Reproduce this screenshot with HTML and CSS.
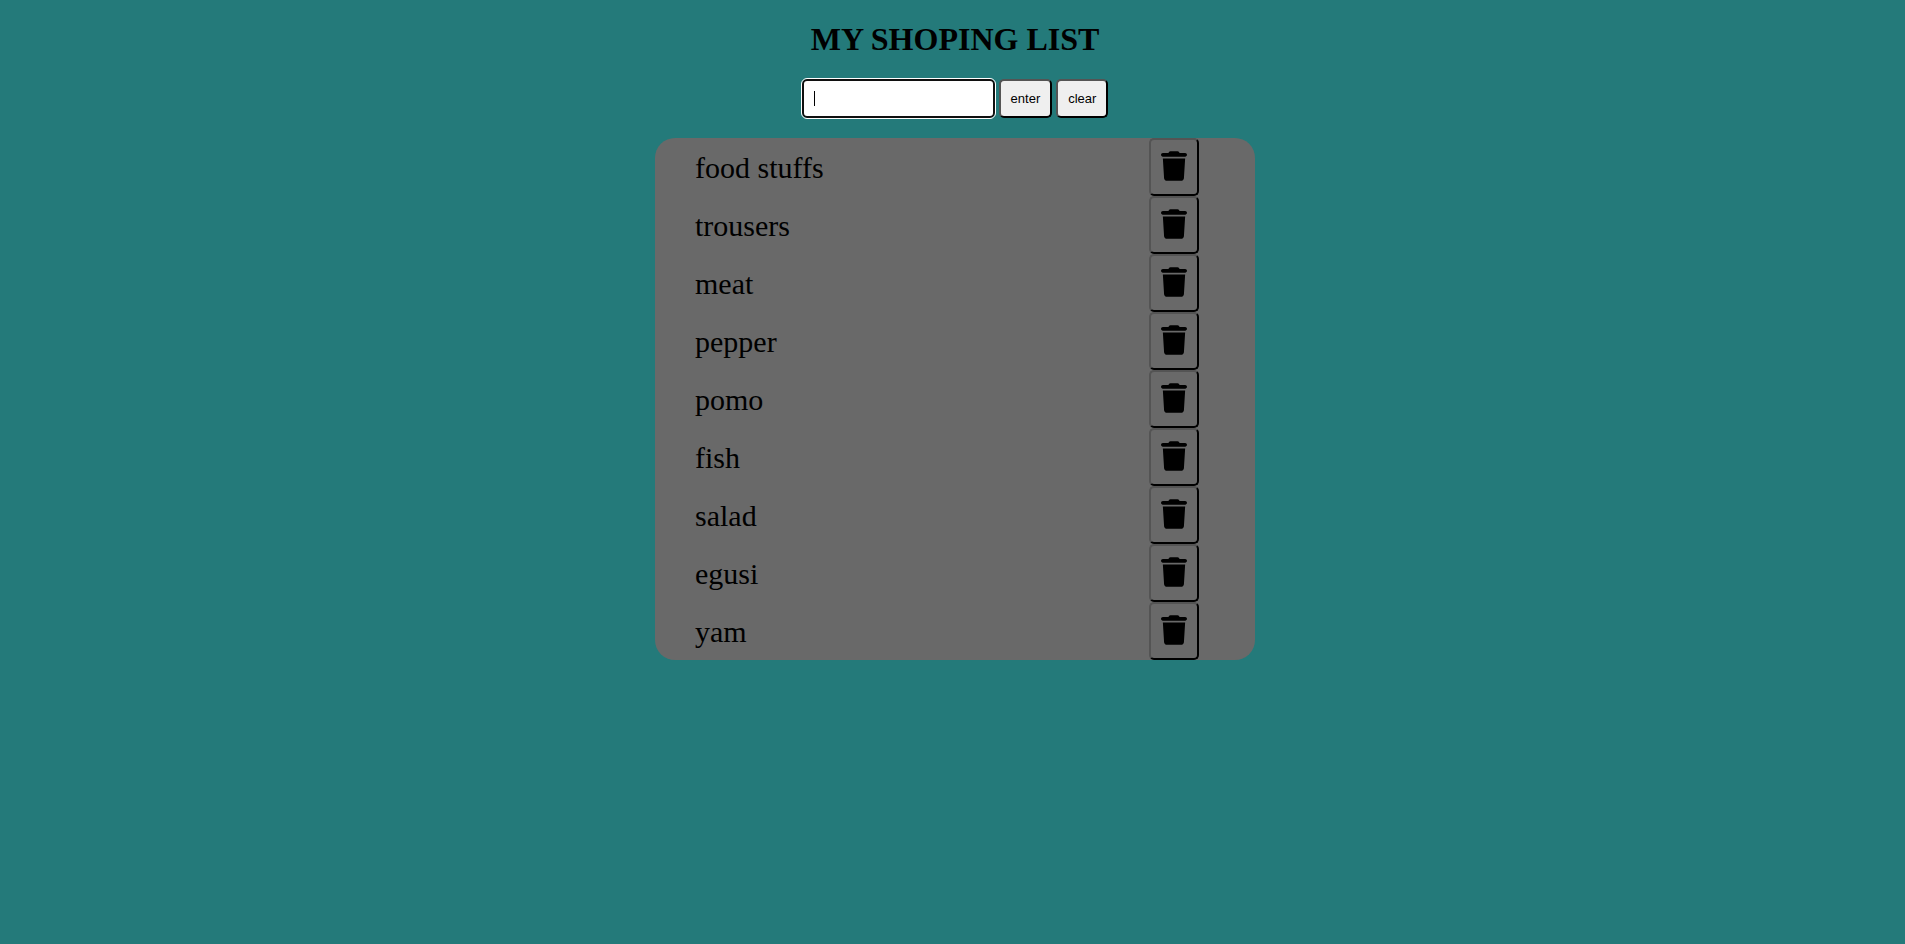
FILE: index.html
```html
<!DOCTYPE html>
<html lang="en">
<head>
<meta charset="utf-8">
<title>My Shoping List</title>
<link rel="stylesheet" href="styles.css">
</head>
<body>
<svg class="sprite" aria-hidden="true">
  <symbol id="trash" viewBox="0 0 448 512">
    <path d="M135.200 17.700L128 32H32C14.300 32 0 46.300 0 64S14.300 96 32 96H416c17.700 0 32-14.300 32-32s-14.300-32-32-32H320l-7.200-14.300C307.400 6.800 296.300 0 284.200 0H163.800c-12.100 0-23.200 6.800-28.600 17.700zM416 128H32L53.200 467c1.600 25.300 22.600 45 47.900 45H346.900c25.300 0 46.300-19.700 47.900-45L416 128z"/>
  </symbol>
</svg>
<main class="page">
  <h1 class="title">MY SHOPING LIST</h1>
  <form class="entry">
    <input class="entry-input" type="text" aria-label="New item">
    <button class="button" type="button">enter</button>
    <button class="button" type="button">clear</button>
  </form>
  <ul class="list">
    <li class="item"><span class="name">food stuffs</span><button class="delete" type="button" aria-label="Delete food stuffs"><svg class="icon"><use href="#trash"/></svg></button></li>
    <li class="item"><span class="name">trousers</span><button class="delete" type="button" aria-label="Delete trousers"><svg class="icon"><use href="#trash"/></svg></button></li>
    <li class="item"><span class="name">meat</span><button class="delete" type="button" aria-label="Delete meat"><svg class="icon"><use href="#trash"/></svg></button></li>
    <li class="item"><span class="name">pepper</span><button class="delete" type="button" aria-label="Delete pepper"><svg class="icon"><use href="#trash"/></svg></button></li>
    <li class="item"><span class="name">pomo</span><button class="delete" type="button" aria-label="Delete pomo"><svg class="icon"><use href="#trash"/></svg></button></li>
    <li class="item"><span class="name">fish</span><button class="delete" type="button" aria-label="Delete fish"><svg class="icon"><use href="#trash"/></svg></button></li>
    <li class="item"><span class="name">salad</span><button class="delete" type="button" aria-label="Delete salad"><svg class="icon"><use href="#trash"/></svg></button></li>
    <li class="item"><span class="name">egusi</span><button class="delete" type="button" aria-label="Delete egusi"><svg class="icon"><use href="#trash"/></svg></button></li>
    <li class="item"><span class="name">yam</span><button class="delete" type="button" aria-label="Delete yam"><svg class="icon"><use href="#trash"/></svg></button></li>
  </ul>
</main>
</body>
</html>
```
FILE: styles.css
```css
* {
  box-sizing: border-box;
}

body {
  margin: 0;
  background: #247a7a;
  color: #000;
  font-family: "Liberation Serif", "Times New Roman", serif;
}

.sprite {
  display: none;
}

.page {
  display: flex;
  flex-direction: column;
  align-items: center;
  padding: 21px 0 20px 5px;
}

.title {
  margin: 0 0 21px;
  font-size: 32px;
  line-height: 37px;
}

.entry {
  display: flex;
  gap: 4px;
  margin-bottom: 20px;
}

.entry-input {
  width: 193px;
  padding: 10px;
  border: 2px solid #101010;
  border-radius: 5px;
  outline: 1px solid #fff;
  /* text caret */
  background: linear-gradient(#000, #000) 10px center / 1px 15px no-repeat #fff;
  font: 13px "Liberation Sans", Arial, sans-serif;
}

.button {
  padding: 10px;
  border: 2px outset #000;
  border-radius: 5px;
  background: #efefef;
  color: #000;
  font: 13px "Liberation Sans", Arial, sans-serif;
  line-height: 15px;
}

.list {
  width: 600px;
  max-width: 100%;
  margin: 0;
  padding: 0 56px 0 40px;
  border-radius: 20px;
  background: dimgray;
  list-style: none;
  font-size: 30px;
}

.item {
  display: flex;
  align-items: center;
  justify-content: space-between;
}

.name {
  padding-top: 2px;
}

.delete {
  width: 50px;
  height: 58px;
  padding: 0 10px 2px;
  border: 2px outset #000;
  border-radius: 5px;
  background: transparent;
  color: #000;
}

.icon {
  display: block;
  width: 26px;
  height: 30px;
  fill: currentColor;
}
```
